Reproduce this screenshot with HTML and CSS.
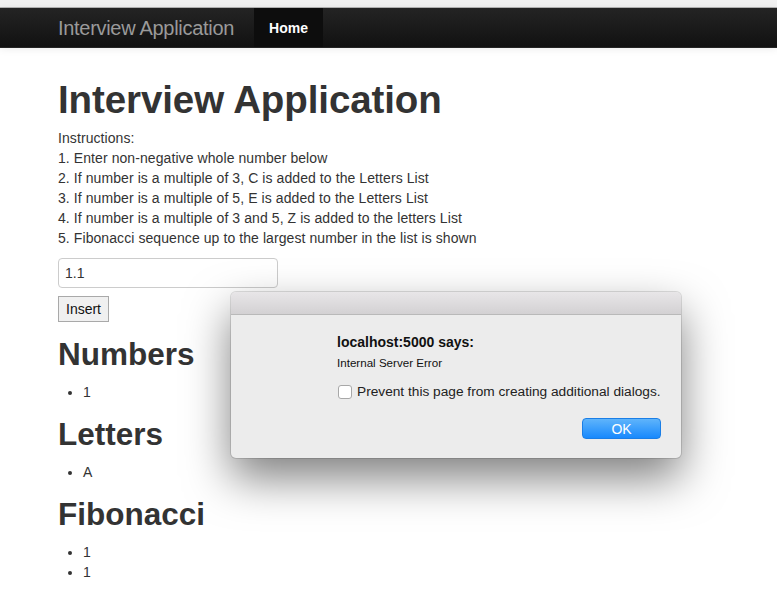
FILE: index.html
```html
<!DOCTYPE html>
<html>
<head>
<meta charset="utf-8">
<link rel="stylesheet" href="styles.css">
</head>
<body>
<div class="chrome"></div>
<div class="navbar">
  <div class="container nav-inner">
    <span class="brand">Interview Application</span>
    <ul class="nav">
      <li class="active"><a>Home</a></li>
    </ul>
  </div>
</div>
<div class="container main">
  <h1>Interview Application</h1>
  <p class="instructions">Instructions:<br>1. Enter non-negative whole number below<br>2. If number is a multiple of 3, C is added to the Letters List<br>3. If number is a multiple of 5, E is added to the Letters List<br>4. If number is a multiple of 3 and 5, Z is added to the letters List<br>5. Fibonacci sequence up to the largest number in the list is shown</p>
  <input class="num-input" type="text" value="1.1">
  <div class="btn-row"><button class="insert">Insert</button></div>
  <h2>Numbers</h2>
  <ul class="list"><li>1</li></ul>
  <h2>Letters</h2>
  <ul class="list"><li>A</li></ul>
  <h2>Fibonacci</h2>
  <ul class="list"><li>1</li><li>1</li></ul>
</div>
<div class="dialog">
  <div class="dialog-title"></div>
  <div class="dialog-body">
    <div class="dlg-head">localhost:5000 says:</div>
    <div class="dlg-msg">Internal Server Error</div>
    <label class="dlg-check"><span class="box"></span>Prevent this page from creating additional dialogs.</label>
    <div class="dlg-actions"><button class="ok">OK</button></div>
  </div>
</div>
</body>
</html>
```
FILE: styles.css
```css
html, body {
  margin: 0;
  padding: 0;
  background: #fff;
}
body {
  font-family: "Liberation Sans", Arial, sans-serif;
  font-size: 14px;
  line-height: 20px;
  color: #333;
  position: relative;
  min-height: 616px;
  overflow: hidden;
}
.chrome {
  height: 7px;
  background: #f1f1f1;
  border-bottom: 1px solid #b4b4b4;
}
.navbar {
  height: 40px;
  background: linear-gradient(to bottom, #242424, #111111);
  border-bottom: 1px solid #252525;
  box-shadow: 0 1px 8px rgba(0,0,0,0.08);
  box-sizing: border-box;
}
.container {
  padding-left: 58px;
}
.nav-inner {
  display: flex;
  align-items: stretch;
  height: 40px;
}
.brand {
  font-size: 20px;
  line-height: 20px;
  font-weight: normal;
  color: #9a9a9a;
  padding: 10px 20px 10px 0;
  letter-spacing: -0.3px;
}
.nav {
  list-style: none;
  margin: 0;
  padding: 0;
  display: flex;
}
.nav li a {
  display: block;
  padding: 10px 15px 10px 15px;
  color: #fff;
  font-weight: bold;
  font-size: 14px;
  line-height: 20px;
}
.nav li.active a {
  background: #0d0d0d;
  height: 39px;
  box-sizing: border-box;
}
.main {
  padding-top: 22px;
}
h1 {
  font-size: 38.5px;
  line-height: 40px;
  margin: 10px 0 8px;
  font-weight: bold;
  color: #333;
  letter-spacing: -0.1px;
}
.instructions {
  margin: 0 0 10px;
  letter-spacing: 0.08px;
}
.num-input {
  display: block;
  width: 220px;
  height: 30px;
  box-sizing: border-box;
  padding: 4px 6px;
  font-family: "Liberation Sans", Arial, sans-serif;
  font-size: 14px;
  color: #333;
  border: 1px solid #ccc;
  border-radius: 4px;
  margin: 0 0 8px;
  background: #fff;
}
.btn-row {
  margin-bottom: 3px;
}
.insert {
  font-family: "Liberation Sans", Arial, sans-serif;
  font-size: 14px;
  height: 26px;
  padding: 0 7px;
  background: #f0f0f0;
  border: 1px solid #a9a9a9;
  color: #111;
  border-radius: 0;
  margin: 0;
}
h2 {
  font-size: 31.5px;
  line-height: 40px;
  margin: 12px 0 8px;
  font-weight: bold;
  color: #333;
}
.list {
  margin: 0 0 10px 25px;
  padding: 0;
}
.dialog {
  position: absolute;
  left: 231px;
  top: 292px;
  width: 450px;
  height: 166px;
  border-radius: 5px;
  background: #ececec;
  box-shadow: 0 20px 45px rgba(0,0,0,0.5), 0 0 0 1px rgba(0,0,0,0.12);
  overflow: hidden;
  font-family: "Liberation Sans", Arial, sans-serif;
  color: #111;
}
.dialog-title {
  height: 22px;
  background: linear-gradient(to bottom, #e8e6e8, #d3d1d3);
  border-bottom: 1px solid #b9b9b9;
}
.dialog-body {
  padding: 19px 20px 0 106px;
}
.dlg-head {
  font-size: 14px;
  font-weight: bold;
  line-height: 16px;
}
.dlg-msg {
  font-size: 11.6px;
  line-height: 14px;
  margin-top: 6px;
}
.dlg-check {
  display: flex;
  align-items: center;
  font-size: 13.7px;
  line-height: 16px;
  margin-top: 14px;
  margin-left: 1px;
  color: #222;
}
.box {
  width: 14px;
  height: 14px;
  border: 1px solid #a8a8a8;
  border-radius: 3px;
  background: #fff;
  margin-right: 5px;
  box-sizing: border-box;
}
.dlg-actions {
  display: flex;
  justify-content: flex-end;
  margin-top: 18px;
}
.ok {
  width: 79px;
  height: 21px;
  border: 1px solid #1a7ee6;
  border-radius: 4px;
  background: linear-gradient(to bottom, #5fb4fb, #1889fd);
  color: #fff;
  font-family: "Liberation Sans", Arial, sans-serif;
  font-size: 14px;
  padding: 0;
  margin-right: 0;
}
```
